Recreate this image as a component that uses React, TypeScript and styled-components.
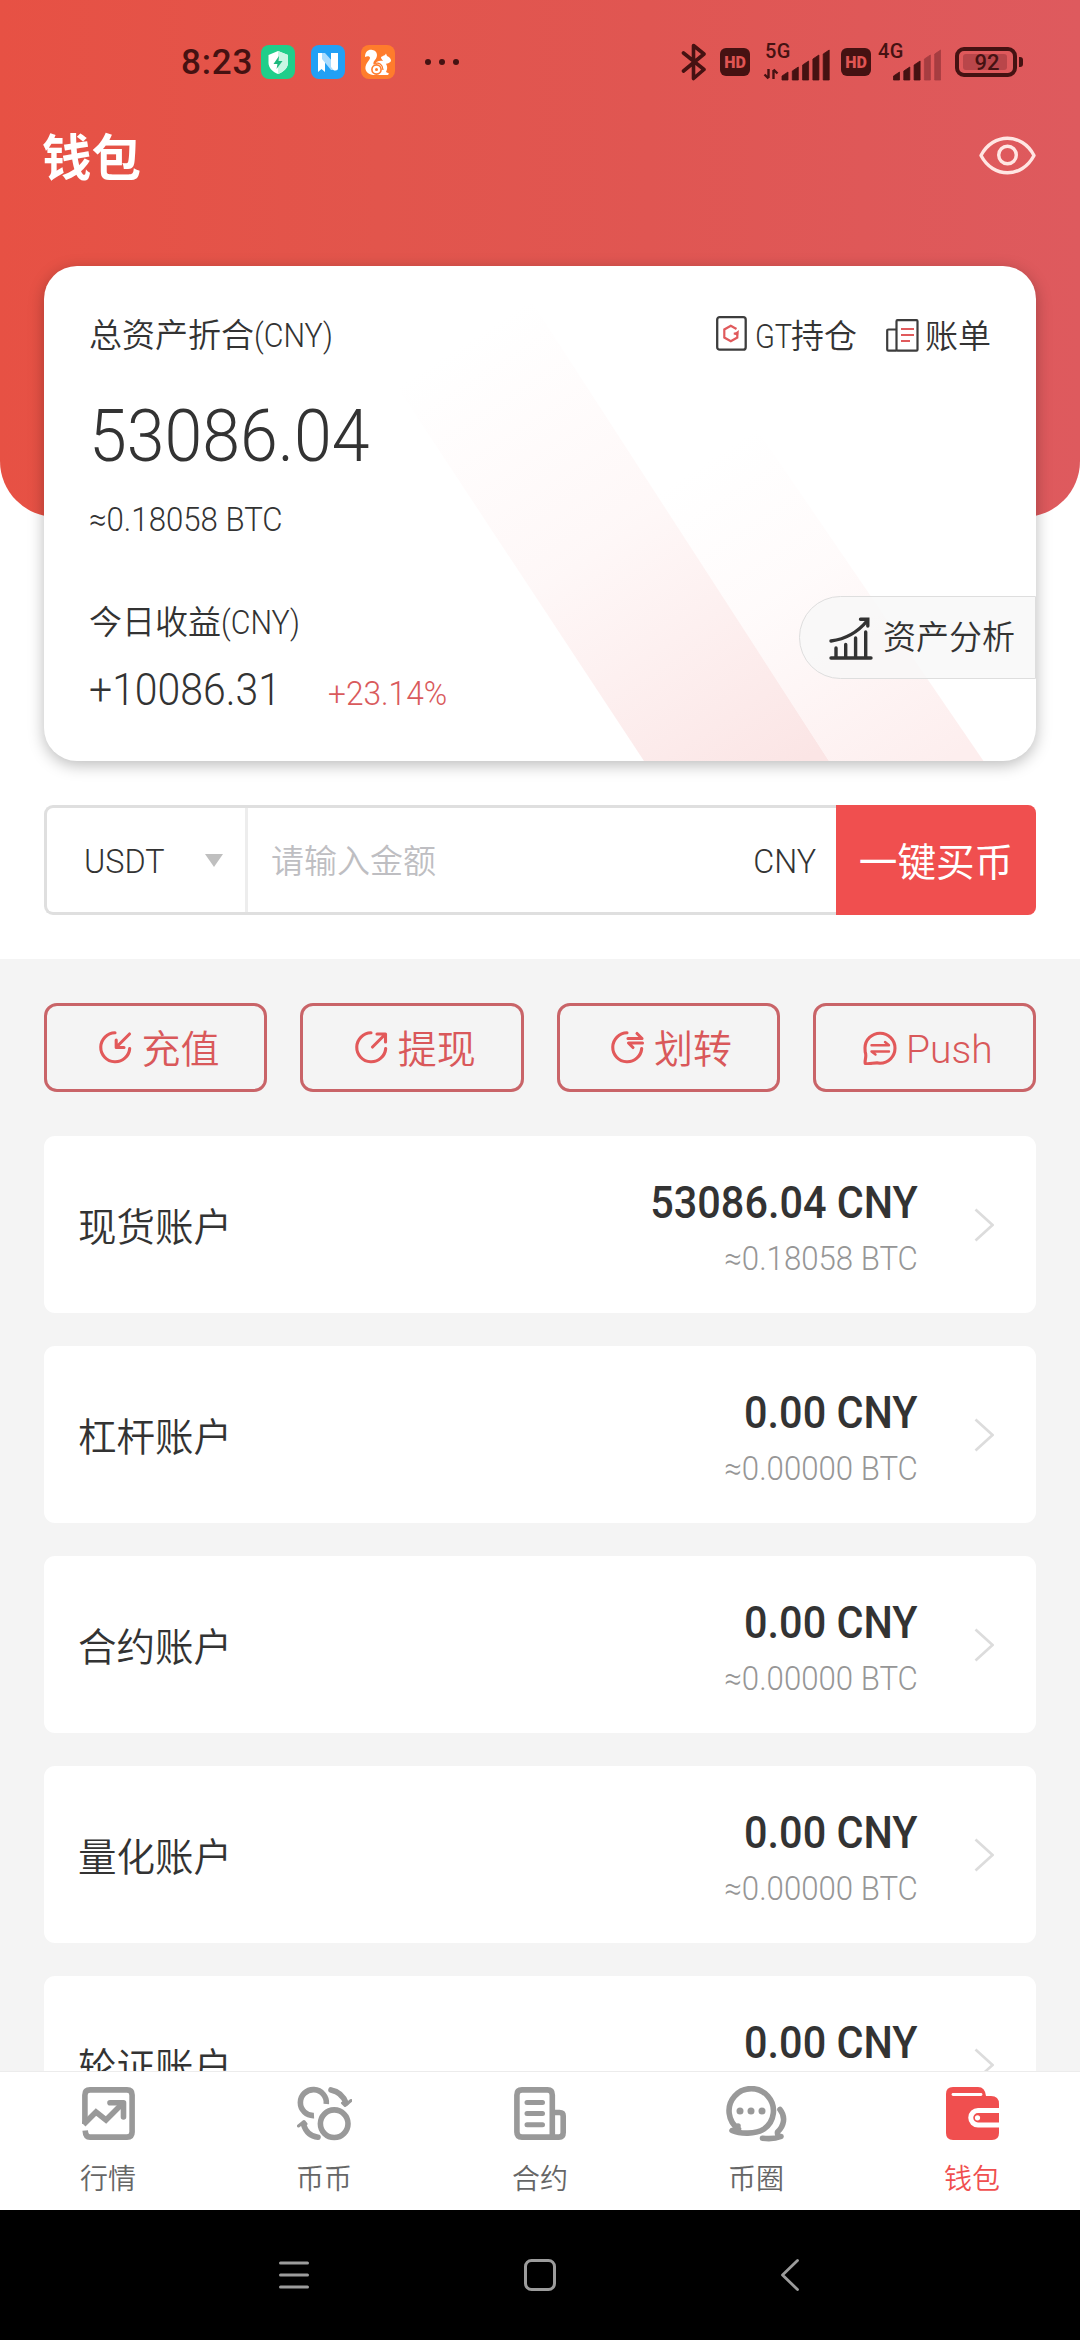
import React from 'react';
import styled, { createGlobalStyle } from 'styled-components';

const Global = createGlobalStyle`
  * { box-sizing: border-box; }
  html, body { margin: 0; padding: 0; background: #f4f4f4; }
  svg { display: block; flex: none; }
`;

const INK = '#451212';
const RED = '#f04f4f';

const Screen = styled.div`
  width: 1080px;
  height: 2340px;
  overflow: hidden;
  display: flex;
  flex-direction: column;
  background: #fff;
  color: #333;
  font-family: Roboto, 'Noto Sans CJK SC', sans-serif;
  font-size: 33px;
  font-weight: 350;
  line-height: 40px;
  white-space: nowrap;
`;

/* Latin and digits are set slightly condensed. */
const Din = styled.span<{ $k?: number; $right?: boolean; $pull?: number }>`
  display: inline-block;
  margin-right: ${(p) => -(p.$pull ?? 0)}px;
  transform: scaleX(${(p) => p.$k ?? 0.93});
  transform-origin: ${(p) => (p.$right ? 'right' : 'left')} center;
`;

const Header = styled.header`
  flex: none;
  height: 517px;
  border-radius: 0 0 56px 56px;
  background: linear-gradient(90deg, #e75144 0%, #e2554c 35%, #e05652 60%, #de5a5e 100%);
`;

const StatusBar = styled.div`
  height: 124px;
  padding: 0 57px 0 181px;
  display: flex;
  align-items: center;
  color: ${INK};
`;

const Clock = styled.span`
  width: 80px;
  padding-top: 2px;
  font-size: 35px;
  font-weight: 500;
  letter-spacing: 0.8px;
`;

const AppIcons = styled.div`
  display: flex;
  gap: 16px;
`;

const Dots = styled.div`
  display: flex;
  gap: 8px;
  margin-left: 30px;
`;

const Dot = styled.i`
  width: 6px;
  height: 6px;
  border-radius: 50%;
  background: ${INK};
`;

const Signals = styled.div`
  margin-left: auto;
  display: flex;
  align-items: center;
`;

const HdBadge = styled.span<{ $ml: number }>`
  width: 30px;
  height: 28px;
  margin-left: ${(p) => p.$ml}px;
  border-radius: 6px;
  background: ${INK};
  color: #e05553;
  font: 900 16px/29px Roboto, sans-serif;
  text-align: center;
`;

const SignalBox = styled.div<{ $ml: number; $w: number }>`
  width: ${(p) => p.$w}px;
  height: 36px;
  margin-left: ${(p) => p.$ml}px;
  display: flex;
  position: relative;
`;

const NetLabel = styled.span`
  position: absolute;
  left: 2px;
  top: -3px;
  font-size: 20px;
  line-height: 20px;
  font-weight: 500;
  letter-spacing: 0.5px;
`;

const Battery = styled.div`
  width: 62px;
  height: 30px;
  margin-left: 14px;
  border: 4px solid ${INK};
  border-radius: 9px;
  padding: 3px 6px 3px 4px;
  display: flex;
`;

const Charge = styled.span`
  flex: 1;
  border-radius: 3px;
  background: #b9464a;
  font-size: 22px;
  line-height: 17px;
  font-weight: 500;
  text-align: center;
  text-indent: 4px;
`;

const Nub = styled.i`
  width: 4px;
  height: 10px;
  margin-left: 2px;
  border-radius: 0 3px 3px 0;
  background: ${INK};
`;

const TitleBar = styled.div`
  height: 62px;
  padding: 0 44px 0 42px;
  display: flex;
  align-items: center;
  justify-content: space-between;
  color: #fff;
`;

const Title = styled.h1`
  margin: 0;
  padding-top: 8px;
  font-size: 49.5px;
  line-height: 62px;
  font-weight: 600;
`;

const Card = styled.section`
  position: relative;
  flex: none;
  width: 992px;
  height: 495px;
  margin: -251px auto 0;
  padding: 50px 0 0 45px;
  border-radius: 33px;
  background: #fff;
  box-shadow: 0 4px 16px rgba(0, 0, 0, 0.27);
`;

const Stripes = styled.svg`
  position: absolute;
  inset: 0;
  border-radius: 33px;
`;

const CardTop = styled.div`
  position: relative;
  display: flex;
  justify-content: space-between;
  padding-right: 45px;
`;

const Links = styled.div`
  display: flex;
`;

const LinkItem = styled.span<{ $ml?: number; $gap: number; $lift: number }>`
  display: flex;
  align-items: center;
  gap: ${(p) => p.$gap}px;
  margin-left: ${(p) => p.$ml ?? 0}px;

  svg {
    margin-bottom: ${(p) => p.$lift}px;
  }
`;

const Total = styled.div`
  position: relative;
  margin-top: 44px;
  font-size: 72px;
  line-height: 72px;
`;

const TotalBtc = styled.div`
  position: relative;
  margin-top: 27px;
`;

const CardBottom = styled.div`
  position: relative;
  margin-top: 56px;
  display: flex;
  justify-content: space-between;
  align-items: flex-start;
`;

const Profit = styled.div`
  padding-top: 7px;
`;

const ProfitLine = styled.div`
  margin-top: 20px;
  display: flex;
  align-items: baseline;
  font-size: 45px;
  line-height: 54px;
`;

const ProfitValue = styled.span`
  width: 239px;
`;

const Percent = styled.span`
  font-size: 33px;
  color: #d95a5c;
`;

const Analysis = styled.div`
  width: 237px;
  height: 83px;
  padding: 1px 0 0 29px;
  border: 1px solid #dedede;
  border-radius: 42px 0 0 42px;
  background: rgba(247, 247, 247, 0.8);
  display: flex;
  align-items: center;
  gap: 10px;
`;

const BuyRow = styled.div`
  flex: none;
  display: flex;
  width: 992px;
  height: 110px;
  margin: 44px auto;
  border: 3px solid #dfdfdf;
  border-right: 0;
  border-radius: 9px;
`;

const Coin = styled.div`
  width: 201px;
  padding: 4px 22px 0 37px;
  border-right: 3px solid #ededed;
  display: flex;
  align-items: center;
  justify-content: space-between;
`;

const Caret = styled.i`
  margin-bottom: 4px;
  border: 9.5px solid transparent;
  border-top: 13px solid #bfbfbf;
  border-bottom: 0;
`;

const AmountField = styled.div`
  flex: 1;
  padding: 4px 20px 0 23px;
  display: flex;
  align-items: center;
  justify-content: space-between;
`;

const Placeholder = styled.span`
  color: #bebec2;
`;

const BuyButton = styled.div`
  width: 200px;
  margin: -3px 0;
  border-radius: 0 8px 8px 0;
  background: ${RED};
  color: #fff;
  font-size: 38.6px;
  font-weight: 400;
  line-height: 115px;
  text-align: center;
`;

const Body = styled.main`
  flex: 1;
  min-height: 0;
  overflow: hidden;
  padding: 44px 44px 0;
  background: #f4f4f4;
`;

const Actions = styled.div`
  display: grid;
  grid-template-columns: repeat(4, 1fr);
  gap: 33px;
  margin-bottom: 44px;
`;

const Action = styled.div`
  height: 89px;
  padding: 4px 0 0 7px;
  border: 3px solid #c96468;
  border-radius: 13px;
  display: flex;
  align-items: center;
  justify-content: center;
  gap: 9px;
  color: #d9585a;
  font-size: 39px;

  svg {
    margin-bottom: 4px;
  }
`;

const Account = styled.div`
  height: 177px;
  margin-bottom: 33px;
  padding: 0 42px 0 34px;
  border-radius: 11px;
  background: #fff;
  display: flex;
  align-items: center;
`;

const AccountName = styled.span`
  flex: 1;
  padding-top: 6px;
  font-size: 38.5px;
`;

const Values = styled.div`
  padding-top: 8px;
  margin-right: 56px;
  text-align: right;
`;

const Cny = styled.div`
  font-size: 45px;
  line-height: 50px;
  font-weight: 500;
`;

const Btc = styled.div`
  margin-top: 11px;
  color: #969696;
`;

const TabBar = styled.nav`
  flex: none;
  height: 139px;
  border-top: 1px solid #ececec;
  background: #fff;
  display: grid;
  grid-template-columns: repeat(5, 1fr);
`;

const Tab = styled.div<{ $on?: boolean }>`
  display: flex;
  flex-direction: column;
  align-items: center;
  padding-top: 14px;
  color: ${(p) => (p.$on ? RED : '#666')};
  font-size: 28px;
`;

const TabIcon = styled.div<{ $on?: boolean }>`
  height: 56px;
  margin-bottom: 18px;
  color: ${(p) => (p.$on ? RED : '#999')};
`;

const SystemNav = styled.footer`
  flex: none;
  height: 130px;
  background: #000;
  display: grid;
  grid-template-columns: 32px 32px 20px;
  column-gap: 214px;
  align-items: center;
  padding-left: 278px;

  svg:last-child {
    margin-left: 10px;
  }
`;

const Bars = ({ x, weak }: { x: number; weak: number }) => (
  <g>
    {[8, 13, 19, 25, 30].map((h, i) => (
      <path
        key={i}
        d={`M${x + i * 10.3} 36 v${-h + 4} l6 -4 v${h} z`}
        fill={i >= 5 - weak ? '#a63d41' : INK}
        stroke={i >= 5 - weak ? '#a63d41' : INK}
        strokeWidth="0.8"
        strokeLinejoin="round"
      />
    ))}
  </g>
);

const ShieldApp = () => (
  <svg width="34" height="34" viewBox="0 0 34 34">
    <rect width="34" height="34" rx="8" fill="#1fce8a" />
    <path d="M17 6 L27 10 V18 C27 23 22 27 17 29 C12 27 7.5 23 7.500 18 V10 Z" fill="#fff" />
    <path d="M17 6 L27 10 V18 C27 23 22 27 17 29 Z" fill="#c9f6e3" />
    <path d="M18 11 L12.500 19 H16.500 L15.500 24 L21.500 16 H17.500 Z" fill="#1bb87c" />
  </svg>
);

const NApp = () => (
  <svg width="34" height="34" viewBox="0 0 34 34">
    <rect width="34" height="34" rx="8" fill="#22a0f5" />
    <path d="M7 8 H14 V27 L10.500 24 L7 27 Z" fill="#fff" />
    <path d="M11 8 H14 L23 18 V25 H20 L11 14 Z" fill="#a9dcff" />
    <path d="M20 8 H27 V23 Q27 25.500 24.500 25.500 H23 L20 22 Z" fill="#fff" />
  </svg>
);

const SquirrelApp = () => (
  <svg width="34" height="34" viewBox="0 0 34 34">
    <rect width="34" height="34" rx="8" fill="#ff7c2c" />
    <path
      d="M4 12 C4 6 8 4 11.500 5 C17 6 17 12 14 15 C12 17 12 19 13 20 C15 16 19 15 22 16 L20 13 C20 11 23 11 24 10 L25 8.500 L26 11 C29 12 30 14 30 16 C28 19 26 18 25 19 C27 22 26 25 25 27 L28 28.500 L27 30 H12 C6 29 3 25 5 20 C6 17 9 15 9 12.500 C8 10.500 6 11 4 12 Z"
      fill="#fff"
    />
    <circle cx="15.500" cy="24.500" r="4.600" fill="none" stroke="#ff7c2c" strokeWidth="1.600" />
    <circle cx="15.500" cy="24.500" r="1.500" fill="#ff7c2c" />
    <path d="M14 18.500 C18 17 22 20 22 25" fill="none" stroke="#ff7c2c" strokeWidth="1.300" />
  </svg>
);

const Eye = () => (
  <svg width="57" height="39" viewBox="0 0 57 39" fill="none" stroke="#ffe6e3" strokeWidth="3.400">
    <path d="M2 19.500 C14 -3.500 43 -3.500 55 19.500 C43 42.500 14 42.500 2 19.500 Z" strokeLinejoin="round" />
    <circle cx="28.500" cy="19" r="8.800" />
  </svg>
);

const GtIcon = () => (
  <svg width="31" height="35" viewBox="0 0 31 35" fill="none">
    <rect x="1.200" y="1.200" width="28.500" height="32.500" rx="2.500" stroke="#3d3d3d" strokeWidth="2.300" />
    <path d="M20.500 13 L14.800 9.800 L8.300 13.500 V21.500 L14.800 25.200 L21.300 21.500 V17.500 H17.800" stroke="#e05a5c" strokeWidth="2.200" />
    <path d="M17.500 18 L23 14 L22 20 Z" fill="#e05a5c" />
  </svg>
);

const BillIcon = () => (
  <svg width="33" height="33" viewBox="0 0 33 33" fill="none" strokeWidth="2.200">
    <rect x="10.500" y="1.200" width="21" height="30.500" rx="1" stroke="#3d3d3d" />
    <path d="M10.500 10.500 H2.500 Q1.200 10.500 1.200 11.800 V30.400 Q1.200 31.700 2.500 31.700 H10.500" stroke="#3d3d3d" />
    <path d="M15 10 H28 M15 16 H28 M15 22 H24" stroke="#e05a5c" />
  </svg>
);

const ChartIcon = () => (
  <svg width="44" height="43" viewBox="0 0 44 43" fill="none" stroke="#333" strokeWidth="3.400" strokeLinecap="round">
    <path d="M2 41 H42 M7 31 V40 M16.700 27.500 V40 M26.600 21 V40 M36.700 15 V40" />
    <path d="M2 24 C17 22 28 16 38 4" />
    <path d="M31.500 2.200 H38.800 V9" />
  </svg>
);

const ring = 'M16 1.800 A14.500 14.500 0 1 0 30.700 17.500';

const ActionSvg = ({ children }: { children: React.ReactNode }) => (
  <svg
    width="34"
    height="34"
    viewBox="0 0 34 34"
    fill="none"
    stroke="#e2595a"
    strokeWidth="3.100"
    strokeLinecap="round"
    strokeLinejoin="round"
  >
    {children}
  </svg>
);

const actions = [
  { label: '充值', icon: <><path d={ring} /><path d="M30.500 3 L17.500 16 M17.200 9 V16.500 H25" /></> },
  { label: '提现', icon: <><path d={ring} /><path d="M17.500 16 L30 3.500 M22 3 H30.500 V11" /></> },
  {
    label: '划转',
    icon: <><path d={ring} /><path d="M17 7.500 H31 L26 2.500 M31.500 12 H17.500 L22 16.500" /></>,
  },
  {
    label: 'Push',
    icon: (
      <>
        <path d="M2 17 A15 15 0 1 1 17 32.200 C12 31 7 33.500 2.200 32.500 C1.500 29 4 25 2.200 21 Z" />
        <path d="M8.500 14.300 H26 L22 11 M26 20.500 H8.500 L12.500 23.500" strokeWidth="2.400" />
      </>
    ),
  },
];

const accounts = [
  { name: '现货账户', cny: '53086.04 CNY', btc: '≈0.18058 BTC' },
  { name: '杠杆账户', cny: '0.00 CNY', btc: '≈0.00000 BTC' },
  { name: '合约账户', cny: '0.00 CNY', btc: '≈0.00000 BTC' },
  { name: '量化账户', cny: '0.00 CNY', btc: '≈0.00000 BTC' },
  { name: '轮证账户', cny: '0.00 CNY', btc: '≈0.00000 BTC' },
];

const line = { fill: 'none', stroke: 'currentColor', strokeWidth: 5.6, strokeLinecap: 'round' as const };

const tabs = [
  {
    label: '行情',
    icon: (
      <svg width="53" height="55" viewBox="0 -1 53 55" {...line} strokeLinecap="butt">
        <path d="M2.900 37 V8 Q2.900 2.900 8 2.900 H45 Q50.100 2.900 50.100 8 V45 Q50.100 50.100 45 50.100 H8 Q3.500 50.100 3.200 43.500" />
        <path d="M1.500 37.500 L14 25 L24 33 L41 16" />
        <path d="M28 15.700 H41.500 V30" strokeLinecap="round" strokeLinejoin="round" />
      </svg>
    ),
  },
  {
    label: '币币',
    icon: (
      <svg width="55" height="55" viewBox="0 -1 55 55" {...line}>
        <circle cx="37.200" cy="36.700" r="13.800" />
        <path d="M29.300 17 A13 13 0 1 0 17 28.600" strokeLinecap="butt" />
        <path d="M34 2.900 Q45 5 49 16" />
        <path d="M54 13.500 L48 18.500 L45.500 16" strokeWidth="3" fill="currentColor" strokeLinejoin="round" />
        <path d="M21 50.300 Q10 49 6.500 37.500" />
        <path d="M1.500 39 L7 34.500 L9 37" strokeWidth="3" fill="currentColor" strokeLinejoin="round" />
      </svg>
    ),
  },
  {
    label: '合约',
    icon: (
      <svg width="52" height="55" viewBox="0 -1 52 55" {...line}>
        <path d="M38.300 50.100 H8 Q2.900 50.100 2.900 45 V8 Q2.900 2.900 8 2.900 H33.500 Q38.300 2.900 38.300 8 V50.100 H45 Q49.200 50.100 49.200 45.500 V29 Q49.200 25.500 45.500 25.500 H38.300" />
        <path d="M13 15.500 H28.500 M13 26.500 H28.500 M13 37.700 H28.500" strokeWidth="5" />
      </svg>
    ),
  },
  {
    label: '币圈',
    icon: (
      <svg width="61" height="56" viewBox="0 0 61 56" {...line}>
        <path d="M12.500 43 A22.200 22.200 0 1 1 38 43 C30 48.500 14 48 6 44.500 Q12 44 12 40" strokeLinejoin="round" />
        <path d="M54 23.500 C60 31 58 40 51.500 46 Q51 50 55 50.500 C50 52.500 43 53 36.500 52.200" strokeLinejoin="round" />
        <g fill="currentColor" stroke="none">
          <circle cx="14" cy="25" r="3.500" />
          <circle cx="25" cy="25" r="3.500" />
          <circle cx="36" cy="25" r="3.500" />
        </g>
      </svg>
    ),
  },
  {
    label: '钱包',
    icon: (
      <svg width="53" height="55" viewBox="0 -1 53 55">
        <path
          d="M7 0 H32 Q39 0 40 9 H45 Q53 9 53 17 V46 Q53 53 46 53 H7 Q0 53 0 46 V7 Q0 0 7 0 Z"
          fill="currentColor"
        />
        <path d="M7 7.500 H35" stroke="#fff" strokeWidth="2.800" strokeLinecap="round" />
        <path d="M53 21 H32 A9.700 9.700 0 0 0 32 40.500 H53 V35.500 H32 A4.700 4.700 0 0 1 32 26 H53 Z" fill="#fff" />
        <circle cx="31.500" cy="30.800" r="2.600" fill="#fff" />
      </svg>
    ),
  },
];

export default function App() {
  return (
    <Screen>
      <Global />
      <Header>
        <StatusBar>
          <Clock>8:23</Clock>
          <AppIcons>
            <ShieldApp />
            <NApp />
            <SquirrelApp />
          </AppIcons>
          <Dots>
            <Dot />
            <Dot />
            <Dot />
          </Dots>
          <Signals>
            <svg width="26" height="40" viewBox="0 0 26 40" fill="none" stroke={INK} strokeWidth="3.600" strokeLinejoin="round" strokeLinecap="round">
              <path d="M2.500 11 L23 27.500 L12.500 36.500 V3.500 L23 12 L2.500 29" />
            </svg>
            <HdBadge $ml={13}>HD</HdBadge>
            <SignalBox $ml={13} $w={67}>
              <NetLabel>5G</NetLabel>
              <svg width="67" height="37" viewBox="0 0 67 37">
                <path d="M5.500 25 V34 M1.500 30.500 L5.500 34.500 M10.500 35 V26 M14.500 29.500 L10.500 25.500" stroke={INK} strokeWidth="2.400" fill="none" />
                <Bars x={19} weak={0} />
              </svg>
            </SignalBox>
            <HdBadge $ml={11}>HD</HdBadge>
            <SignalBox $ml={5} $w={65}>
              <NetLabel>4G</NetLabel>
              <svg width="65" height="37" viewBox="0 0 65 37">
                <Bars x={17.5} weak={2} />
              </svg>
            </SignalBox>
            <Battery>
              <Charge>92</Charge>
            </Battery>
            <Nub />
          </Signals>
        </StatusBar>
        <TitleBar>
          <Title>钱包</Title>
          <Eye />
        </TitleBar>
      </Header>

      <Card>
        <Stripes width="992" height="495" viewBox="0 0 992 495">
          <defs>
            <linearGradient id="s1" gradientUnits="userSpaceOnUse" x1="430" y1="70" x2="720" y2="520">
              <stop offset="0" stopColor="#fce6e6" stopOpacity="0" />
              <stop offset="0.450" stopColor="#fce6e6" stopOpacity="0.300" />
              <stop offset="1" stopColor="#fbe5e5" />
            </linearGradient>
            <linearGradient id="s2" gradientUnits="userSpaceOnUse" x1="670" y1="190" x2="880" y2="510">
              <stop offset="0" stopColor="#fdeeee" stopOpacity="0" />
              <stop offset="0.400" stopColor="#fdeeee" stopOpacity="0.250" />
              <stop offset="1" stopColor="#fdeeee" />
            </linearGradient>
          </defs>
          <path d="M346 110 L484 30 L785 495 H600 Z" fill="url(#s1)" />
          <path d="M592 197 L690 130 L939.500 495 H785 Z" fill="url(#s2)" />
        </Stripes>
        <CardTop>
          <span>
            总资产折合<Din $k={0.92}>(CNY)</Din>
          </span>
          <Links>
            <LinkItem $gap={8} $lift={6}>
              <GtIcon />
              <span>
                <Din $k={0.88} $pull={6}>
                  GT
                </Din>
                持仓
              </span>
            </LinkItem>
            <LinkItem $ml={29} $gap={6} $lift={2}>
              <BillIcon />
              <span>账单</span>
            </LinkItem>
          </Links>
        </CardTop>
        <Total>
          <Din $k={0.945}>53086.04</Din>
        </Total>
        <TotalBtc>
          <Din $k={0.945}>≈0.18058 BTC</Din>
        </TotalBtc>
        <CardBottom>
          <Profit>
            <div>
              今日收益<Din $k={0.92}>(CNY)</Din>
            </div>
            <ProfitLine>
              <ProfitValue>
                <Din $k={0.91}>+10086.31</Din>
              </ProfitValue>
              <Percent>
                <Din $k={0.96}>+23.14%</Din>
              </Percent>
            </ProfitLine>
          </Profit>
          <Analysis>
            <ChartIcon />
            资产分析
          </Analysis>
        </CardBottom>
      </Card>

      <BuyRow>
        <Coin>
          <Din $k={0.98}>USDT</Din>
          <Caret />
        </Coin>
        <AmountField>
          <Placeholder>请输入金额</Placeholder>
          <Din $k={0.98} $right>
            CNY
          </Din>
        </AmountField>
        <BuyButton>一键买币</BuyButton>
      </BuyRow>

      <Body>
        <Actions>
          {actions.map((a) => (
            <Action key={a.label}>
              <ActionSvg>{a.icon}</ActionSvg>
              {a.label}
            </Action>
          ))}
        </Actions>
        {accounts.map((a) => (
          <Account key={a.name}>
            <AccountName>{a.name}</AccountName>
            <Values>
              <Cny>
                <Din $k={0.92} $right>
                  {a.cny}
                </Din>
              </Cny>
              <Btc>
                <Din $k={0.945} $right>
                  {a.btc}
                </Din>
              </Btc>
            </Values>
            <svg width="20" height="34" viewBox="0 0 20 34" fill="none" stroke="#dcdcdc" strokeWidth="2.600">
              <path d="M1.500 1.500 L18.500 17 L1.500 32.500" />
            </svg>
          </Account>
        ))}
      </Body>

      <TabBar>
        {tabs.map((t, i) => (
          <Tab key={t.label} $on={i === 4}>
            <TabIcon $on={i === 4}>{t.icon}</TabIcon>
            {t.label}
          </Tab>
        ))}
      </TabBar>

      <SystemNav>
        <svg width="32" height="34" viewBox="0 0 32 34" stroke="#9c9c9c" strokeWidth="3" strokeLinecap="round">
          <path d="M2.500 5 H29.500 M2.500 17 H29.500 M2.500 29 H29.500" />
        </svg>
        <svg width="32" height="34" viewBox="0 0 32 34" fill="none" stroke="#9c9c9c" strokeWidth="3">
          <rect x="1.500" y="2.500" width="29" height="29" rx="6" />
        </svg>
        <svg width="20" height="34" viewBox="0 0 20 34" fill="none" stroke="#9c9c9c" strokeWidth="2.800" strokeLinecap="round" strokeLinejoin="round">
          <path d="M17.500 2.500 L2.500 17 L17.500 31.500" />
        </svg>
      </SystemNav>
    </Screen>
  );
}
